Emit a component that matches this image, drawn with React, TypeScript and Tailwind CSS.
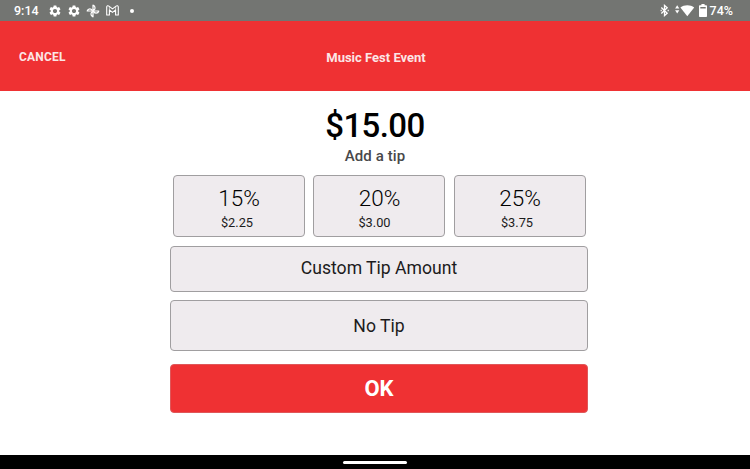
import React from "react";
import { MdSettings } from "react-icons/md";

function BluetoothIcon() {
  return (
    <svg className="mr-[4px] h-[13px] w-[13px]" viewBox="0 0 13 13" fill="none" stroke="currentColor" strokeWidth="1.3">
      <path d="M3.300 3.500 9.200 9.200 6.500 11.600V1.400L9.200 3.800 3.300 9.500" />
      <path d="M2.600 6.500h1.200M9.600 6.500h1.200" />
    </svg>
  );
}

function PhotosIcon() {
  return (
    <svg className="h-[14px] w-[14px]" viewBox="0 0 14 14" fill="none" stroke="currentColor" strokeWidth="1.2" strokeLinejoin="round">
      <path d="M7 7V1.200A2.800 2.800 0 0 1 7 6.600" />
      <path d="M7 7H12.800A2.800 2.800 0 0 1 7.400 7" />
      <path d="M7 7V12.800A2.800 2.800 0 0 1 7 7.400" />
      <path d="M7 7H1.200A2.800 2.800 0 0 1 6.600 7" />
    </svg>
  );
}

function MailIcon() {
  return (
    <svg className="h-[11px] w-[13px]" viewBox="0 0 13 11" fill="none" stroke="currentColor" strokeWidth="1.1" strokeLinejoin="round">
      <path d="M.7 2.1C.7.8 2 .4 2.9 1.1L6.5 3.9 10.1 1.1C11 .4 12.3.8 12.3 2.1V10H9.600V5L6.5 7.4 3.400 5V10H.7Z" />
      <path d="M3.400 5V1.800M9.600 5V1.800" strokeWidth=".6" />
    </svg>
  );
}

function WifiIcon() {
  return (
    <svg className="h-[13px] w-[20px]" viewBox="0 0 20 13" fill="currentColor">
      <path d="M2.2 1.200 4.300 4.600H.1Z" />
      <path d="M2.2 9.600.1 6.200H4.300Z" />
      <path d="M5.400 3.600C9.200.6 15.400.6 19.200 3.600L12.300 12.300Z" />
    </svg>
  );
}

function BatteryIcon() {
  return (
    <svg className="h-[13px] w-[8px]" viewBox="0 0 8 13">
      <path fill="currentColor" d="M2.4 0h3.2v1.3H7c.6 0 1 .4 1 1V12c0 .6-.4 1-1 1H1c-.6 0-1-.4-1-1V2.300c0-.6.4-1 1-1h1.400Z" />
      <path fill="#737572" d="M1.300 3h5.400v1.500H1.300Z" />
    </svg>
  );
}

const tips = [
  { percent: "15%", amount: "$2.25", shift: "pr-[3px]" },
  { percent: "20%", amount: "$3.00", shift: "pr-[9px]" },
  { percent: "25%", amount: "$3.75", shift: "pr-[5px]" },
];

export default function App() {
  return (
    <div className="flex h-[469px] w-[750px] flex-col overflow-hidden bg-white font-[Roboto,sans-serif] text-black">
      <div className="flex h-[21px] shrink-0 items-center justify-between bg-[#737572] pr-[17px] pl-[14px] text-white">
        <div className="flex items-center">
          <span className="w-[34px] text-[12.500px] font-medium leading-[21px]">9:14</span>
          <MdSettings className="mr-[5px] size-[14px]" />
          <MdSettings className="mr-[5px] size-[14px]" />
          <PhotosIcon />
          <span className="w-[6px]" />
          <MailIcon />
          <span className="ml-[11px] size-[4px] rounded-full bg-white" />
        </div>
        <div className="flex items-center">
          <BluetoothIcon />
          <WifiIcon />
          <span className="w-[4px]" />
          <BatteryIcon />
          <span className="ml-[3px] text-[12.500px] font-medium leading-[21px]">74%</span>
        </div>
      </div>

      <header className="grid h-[70px] shrink-0 grid-cols-[1fr_auto_1fr] items-center bg-[#ef3133] px-[19px] pt-[2px] text-[#fce6e6]">
        <button className="justify-self-start text-[12px] font-bold tracking-[0.2px]">CANCEL</button>
        <h1 className="pl-[2px] pt-px text-[13px] font-bold">Music Fest Event</h1>
      </header>

      <main className="flex flex-1 flex-col items-center pl-[8px]">
        <p className="mt-[15px] mr-[8px] text-[33px] leading-[39px] font-medium tracking-[-0.600px]">$15.00</p>
        <p className="mr-[8px] pt-px text-[15px] leading-[21px] font-medium tracking-[0.1px] text-[#48484a]">Add a tip</p>
        <div className="mt-[8px] flex gap-[8.500px]">
          {tips.map((tip) => (
            <button key={tip.percent} className="flex h-[62px] w-[132px] flex-col items-center rounded-[4px] border border-[#a09ea0] bg-[#efebee] pt-[9px]">
              <span className="pl-px text-[22.500px] leading-[26px] font-light">{tip.percent}</span>
              <span className={"text-[12.800px] leading-[24px] text-[#1c1b1c] " + tip.shift}>{tip.amount}</span>
            </button>
          ))}
        </div>
        <button className="mt-[9px] h-[46px] w-[418px] rounded-[4px] border border-[#a09ea0] bg-[#efebee] pb-[2px] text-[17.600px] text-[#1c1b1c]">Custom Tip Amount</button>
        <button className="mt-[8px] h-[51px] w-[418px] rounded-[4px] border border-[#a09ea0] bg-[#efebee] pt-px text-[17.600px] text-[#1c1b1c]">No Tip</button>
        <button className="mt-[13px] h-[49px] w-[418px] rounded-[4px] border border-[#df5759] bg-[#ef3133] text-[22px] font-bold text-white">OK</button>
      </main>

      <footer className="flex h-[14px] shrink-0 items-center justify-center bg-black">
        <div className="h-[3px] w-[64px] rounded-full bg-white" />
      </footer>
    </div>
  );
}
